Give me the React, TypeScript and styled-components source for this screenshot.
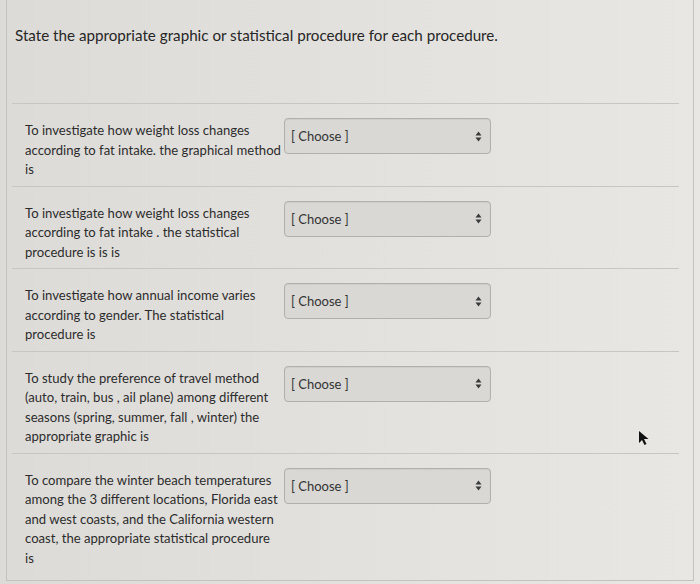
import styled, { createGlobalStyle } from "styled-components";

const GlobalStyle = createGlobalStyle`
  html, body {
    margin: 0;
    padding: 0;
    background: #e6e4e1;
  }
  body {
    font-family: Lato, "Open Sans", sans-serif;
    color: #2e2e2e;
  }
`;

const Page = styled.div`
  position: relative;
  width: 700px;
  height: 584px;
  overflow: hidden;
  background: linear-gradient(90deg, #dddbd8 0%, #e3e1de 50%, #e9e7e4 100%);
`;

const Card = styled.div`
  margin: 0 6px;
  height: 580px;
  border-left: 1px solid #c4c2bf;
  border-right: 1px solid #c4c2bf;
  border-bottom: 1px solid #c4c2bf;
`;

const Header = styled.div`
  height: 103px;
  padding: 25px 0 0 8px;
  box-sizing: border-box;
`;

const Title = styled.div`
  font-size: 15.2px;
  line-height: 20px;
  color: #262626;
`;

const Answers = styled.div`
  margin: 0 14px 0 5px;
`;

const Row = styled.div`
  display: flex;
  align-items: flex-start;
  gap: 4px;
  padding: 17px 0 6px 13px;
  border-top: 1px solid #c8c6c3;
`;

const Prompt = styled.div`
  width: 255px;
  font-size: 13.1px;
  line-height: 19.5px;
  color: #2c2c2c;
`;

const Line = styled.span`
  display: block;
  white-space: nowrap;
`;

const SelectBox = styled.div`
  display: flex;
  align-items: center;
  justify-content: space-between;
  width: 207px;
  height: 36px;
  margin-top: -3px;
  padding: 0 8px 0 6px;
  box-sizing: border-box;
  background: #d9d8d5;
  border: 1px solid #b2b0ad;
  border-radius: 4px;
  box-shadow: inset 0 1px 1px rgba(0, 0, 0, 0.05);
  font-size: 13px;
  color: #333;
`;

const Pointer = styled.svg`
  position: absolute;
  left: 638px;
  top: 430px;
`;

const items = [
  [
    "To investigate how weight loss changes",
    "according to fat intake. the graphical method",
    "is",
  ],
  [
    "To investigate how weight loss changes",
    "according to fat intake . the statistical",
    "procedure is is is",
  ],
  [
    "To investigate how annual income varies",
    "according to gender. The statistical",
    "procedure is",
  ],
  [
    "To study the preference of travel method",
    "(auto, train, bus , ail plane) among different",
    "seasons (spring, summer, fall , winter) the",
    "appropriate graphic is",
  ],
  [
    "To compare the winter beach temperatures",
    "among the 3 different locations, Florida east",
    "and west coasts, and the California western",
    "coast, the appropriate statistical procedure",
    "is",
  ],
];

function Arrows() {
  return (
    <svg width="7" height="11" viewBox="0 0 7 11">
      <path d="M3.5 0.5 L6.5 4.5 L0.5 4.5 Z" fill="#3b3b3b" />
      <path d="M3.5 10.5 L6.5 6.5 L0.5 6.5 Z" fill="#3b3b3b" />
    </svg>
  );
}

export default function App() {
  return (
    <Page>
      <GlobalStyle />
      <Card>
        <Header>
          <Title>
            State the appropriate graphic or statistical procedure for each procedure.
          </Title>
        </Header>
        <Answers>
          {items.map((lines, i) => (
            <Row key={i}>
              <Prompt>
                {lines.map((l, j) => (
                  <Line key={j}>{l}</Line>
                ))}
              </Prompt>
              <SelectBox>
                <span>[ Choose ]</span>
                <Arrows />
              </SelectBox>
            </Row>
          ))}
        </Answers>
      </Card>
      <Pointer width="12" height="16" viewBox="0 0 12 16">
        <path d="M1 1 L1 13 L4 10 L6.5 15 L8.5 14 L6 9 L10.5 9 Z" fill="#111" />
      </Pointer>
    </Page>
  );
}
